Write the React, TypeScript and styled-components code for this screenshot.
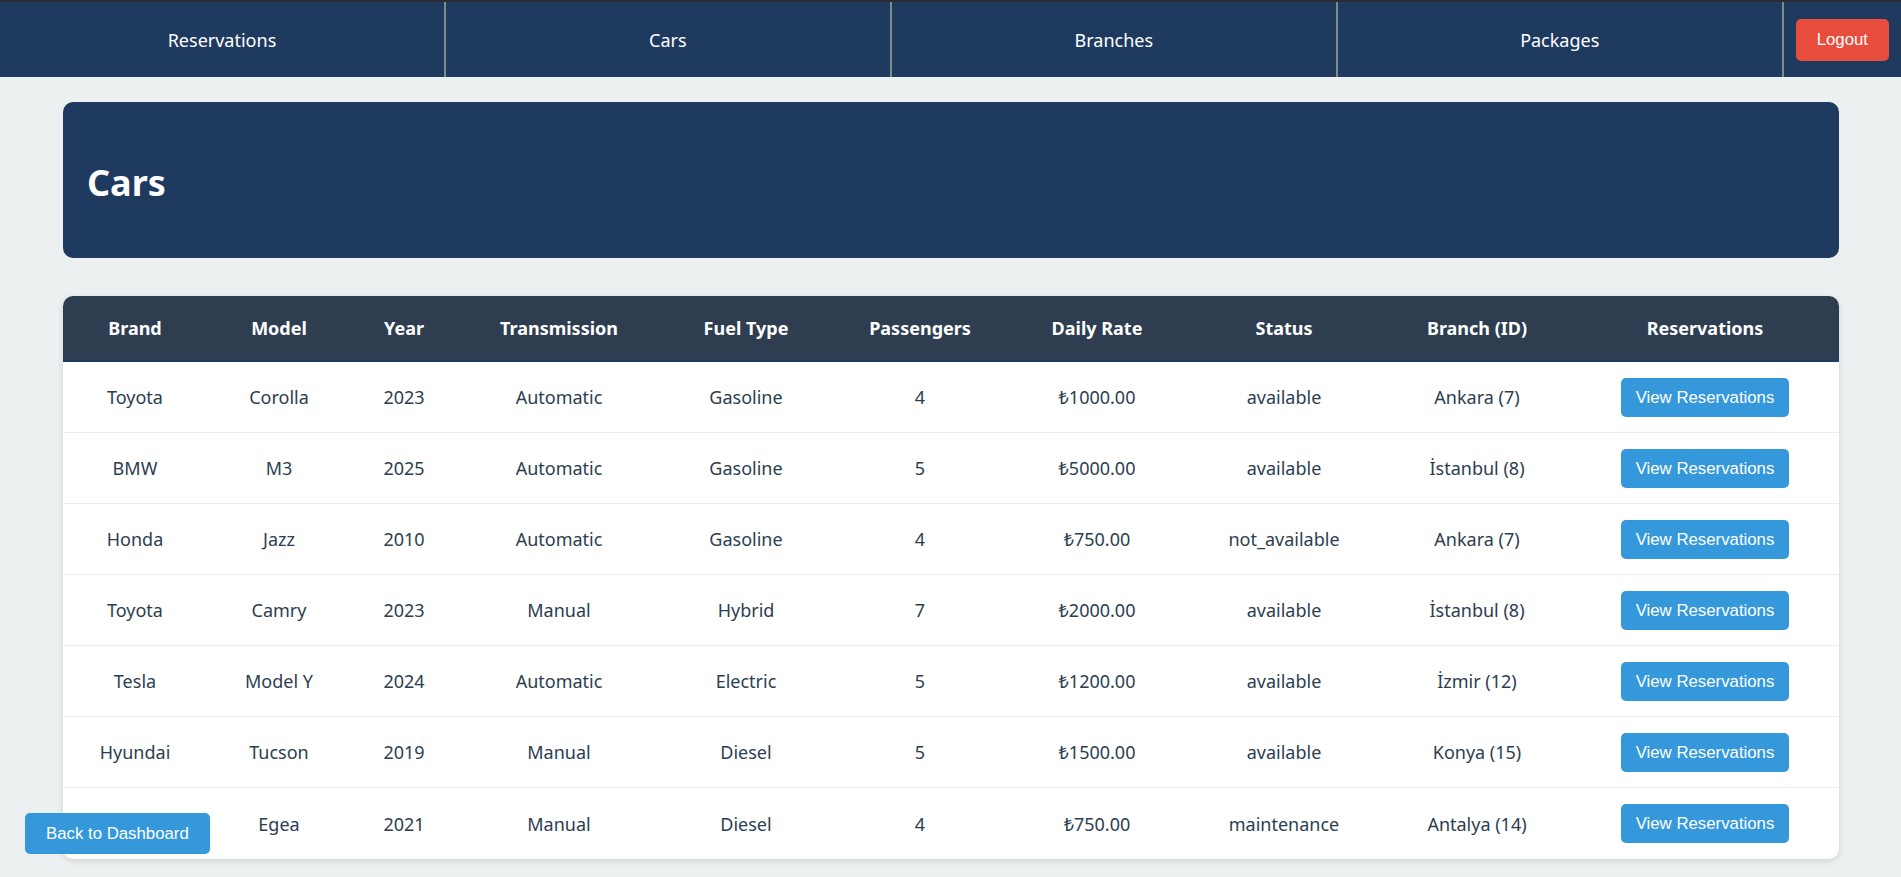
import * as React from 'react';
import styled, { createGlobalStyle } from 'styled-components';

const GlobalStyle = createGlobalStyle`
  html, body {
    margin: 0;
    padding: 0;
    background: #ecf0f1;
    font-family: "Noto Sans", "Open Sans", sans-serif;
    color: #2c3e50;
  }
  * {
    box-sizing: border-box;
  }
`;

const StyledNav = styled.nav`
  display: flex;
  align-items: stretch;
  height: 77px;
  background-color: #1f3a5f;
  border-top: 2px solid #2a2d33;
`;

const StyledNavItem = styled.a`
  flex: 1;
  display: flex;
  align-items: center;
  justify-content: center;
  color: #fff;
  font-size: 18px;
  text-decoration: none;
  border-right: 2px solid #7f8c8d;
  cursor: pointer;
`;

const StyledLogoutCell = styled.div`
  display: flex;
  align-items: center;
  padding: 0 12px;
`;

const StyledButton = styled.button<{ $variant?: 'danger' | 'primary' }>`
  font-family: "Liberation Sans", Arial, sans-serif;
  font-size: 16.8px;
  line-height: 19px;
  color: #fff;
  border: none;
  border-radius: 5px;
  cursor: pointer;
  background-color: ${(p) => (p.$variant === 'danger' ? '#e74c3c' : '#3498db')};
`;

const StyledLogoutButton = styled(StyledButton)`
  padding: 11.5px 21px;
`;

const StyledViewButton = styled(StyledButton)`
  padding: 10px 14.5px;
`;

const StyledBackButton = styled(StyledButton)`
  position: fixed;
  left: 25px;
  bottom: 23px;
  padding: 11px 21px;
`;

const StyledMain = styled.main`
  display: flex;
  flex-direction: column;
  gap: 38px;
  padding: 25px 62px 20px 63px;
`;

const StyledHeader = styled.header`
  display: flex;
  align-items: center;
  height: 156px;
  padding: 4px 24px 0;
  background-color: #1f3a5f;
  border-radius: 10px;
`;

const StyledTitle = styled.h1`
  margin: 0;
  color: #fff;
  font-size: 36px;
  font-weight: 700;
`;

const StyledTableWrapper = styled.div`
  background: #fff;
  border-radius: 10px;
  overflow: hidden;
  box-shadow: 0 2px 6px rgba(0, 0, 0, 0.12);
`;

const StyledTable = styled.table`
  width: 100%;
  table-layout: fixed;
  border-collapse: separate;
  border-spacing: 0;
`;

const StyledTh = styled.th`
  height: 66px;
  padding: 0 8px;
  background-color: #2e3e50;
  color: #fff;
  font-size: 18px;
  font-weight: 700;
  text-align: center;
  border-bottom: 2px solid #1f3a5f;
`;

const StyledTd = styled.td`
  height: 71px;
  padding: 0 8px;
  font-size: 18px;
  text-align: center;
  vertical-align: middle;
  color: #2c3e50;
  border-bottom: 1px solid #ececec;

  tr:last-child > & {
    border-bottom: none;
  }
`;

const columns = [
  { label: 'Brand', width: 144 },
  { label: 'Model', width: 144 },
  { label: 'Year', width: 106 },
  { label: 'Transmission', width: 204 },
  { label: 'Fuel Type', width: 170 },
  { label: 'Passengers', width: 178 },
  { label: 'Daily Rate', width: 176 },
  { label: 'Status', width: 198 },
  { label: 'Branch (ID)', width: 188 },
  { label: 'Reservations', width: 268 },
];

const cars = [
  ['Toyota', 'Corolla', '2023', 'Automatic', 'Gasoline', '4', '₺1000.00', 'available', 'Ankara (7)'],
  ['BMW', 'M3', '2025', 'Automatic', 'Gasoline', '5', '₺5000.00', 'available', 'İstanbul (8)'],
  ['Honda', 'Jazz', '2010', 'Automatic', 'Gasoline', '4', '₺750.00', 'not_available', 'Ankara (7)'],
  ['Toyota', 'Camry', '2023', 'Manual', 'Hybrid', '7', '₺2000.00', 'available', 'İstanbul (8)'],
  ['Tesla', 'Model Y', '2024', 'Automatic', 'Electric', '5', '₺1200.00', 'available', 'İzmir (12)'],
  ['Hyundai', 'Tucson', '2019', 'Manual', 'Diesel', '5', '₺1500.00', 'available', 'Konya (15)'],
  ['Fiat', 'Egea', '2021', 'Manual', 'Diesel', '4', '₺750.00', 'maintenance', 'Antalya (14)'],
];

const navLinks = ['Reservations', 'Cars', 'Branches', 'Packages'];

export default function App() {
  return (
    <>
      <GlobalStyle />
      <StyledNav>
        {navLinks.map((link) => (
          <StyledNavItem key={link}>{link}</StyledNavItem>
        ))}
        <StyledLogoutCell>
          <StyledLogoutButton $variant="danger">Logout</StyledLogoutButton>
        </StyledLogoutCell>
      </StyledNav>

      <StyledMain>
        <StyledHeader>
          <StyledTitle>Cars</StyledTitle>
        </StyledHeader>

        <StyledTableWrapper>
          <StyledTable>
            <colgroup>
              {columns.map((col) => (
                <col key={col.label} style={{ width: col.width }} />
              ))}
            </colgroup>
            <thead>
              <tr>
                {columns.map((col) => (
                  <StyledTh key={col.label}>{col.label}</StyledTh>
                ))}
              </tr>
            </thead>
            <tbody>
              {cars.map((car, id) => (
                <tr key={id}>
                  {car.map((value, i) => (
                    <StyledTd key={i}>{value}</StyledTd>
                  ))}
                  <StyledTd>
                    <StyledViewButton>View Reservations</StyledViewButton>
                  </StyledTd>
                </tr>
              ))}
            </tbody>
          </StyledTable>
        </StyledTableWrapper>
      </StyledMain>

      <StyledBackButton>Back to Dashboard</StyledBackButton>
    </>
  );
}
